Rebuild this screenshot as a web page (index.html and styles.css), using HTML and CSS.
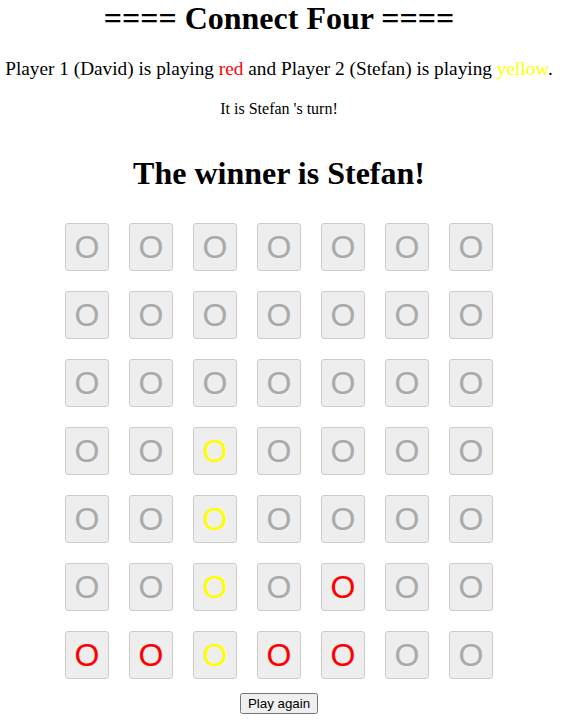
FILE: index.html
```html
<!DOCTYPE html>
<html>
<head>
<meta charset="utf-8">
<link rel="stylesheet" href="styles.css">
</head>
<body>
<main class="page">
  <h1 class="title">==== Connect Four ====</h1>
  <p class="players">Player 1 (David) is playing <span class="red">red</span> and Player 2 (Stefan) is playing <span class="yellow">yellow</span>.</p>
  <p class="turn">It is Stefan 's turn!</p>
  <h2 class="winner">The winner is Stefan!</h2>
  <div class="board">
    <button class="cell">O</button><button class="cell">O</button><button class="cell">O</button><button class="cell">O</button><button class="cell">O</button><button class="cell">O</button><button class="cell">O</button>
    <button class="cell">O</button><button class="cell">O</button><button class="cell">O</button><button class="cell">O</button><button class="cell">O</button><button class="cell">O</button><button class="cell">O</button>
    <button class="cell">O</button><button class="cell">O</button><button class="cell">O</button><button class="cell">O</button><button class="cell">O</button><button class="cell">O</button><button class="cell">O</button>
    <button class="cell">O</button><button class="cell">O</button><button class="cell y">O</button><button class="cell">O</button><button class="cell">O</button><button class="cell">O</button><button class="cell">O</button>
    <button class="cell">O</button><button class="cell">O</button><button class="cell y">O</button><button class="cell">O</button><button class="cell">O</button><button class="cell">O</button><button class="cell">O</button>
    <button class="cell">O</button><button class="cell">O</button><button class="cell y">O</button><button class="cell">O</button><button class="cell r">O</button><button class="cell">O</button><button class="cell">O</button>
    <button class="cell r">O</button><button class="cell r">O</button><button class="cell y">O</button><button class="cell r">O</button><button class="cell r">O</button><button class="cell">O</button><button class="cell">O</button>
  </div>
  <div class="actions"><button class="again">Play again</button></div>
</main>
</body>
</html>
```
FILE: styles.css
```css
html, body {
  margin: 0;
  padding: 0;
  background: #fff;
}
.page {
  width: 558px;
  font-family: "Liberation Serif", "Times New Roman", serif;
  color: #000;
  text-align: center;
}
.title {
  font-size: 32px;
  font-weight: bold;
  margin: 0;
  line-height: 37px;
}
.players {
  font-size: 19.3px;
  margin: 21px 0 0;
  line-height: 21px;
  white-space: nowrap;
}
.red { color: #ff0000; }
.yellow { color: #ffff00; }
.turn {
  font-size: 16px;
  margin: 21px 0 0;
  line-height: 18px;
}
.winner {
  font-size: 32px;
  font-weight: bold;
  margin: 37px 0 0;
  line-height: 37px;
}
.board {
  display: grid;
  grid-template-columns: repeat(7, 44px);
  grid-auto-rows: 48px;
  column-gap: 20px;
  row-gap: 20px;
  justify-content: center;
  margin-top: 31px;
}
.cell {
  width: 44px;
  height: 48px;
  padding: 0;
  margin: 0;
  background: #eeeeee;
  border: 1px solid #cccccc;
  border-radius: 3px;
  font-family: "Liberation Sans", Arial, sans-serif;
  font-size: 32px;
  color: #aaaaaa;
  line-height: 46px;
}
.cell.r { color: #ff0000; }
.cell.y { color: #ffff00; }
.actions {
  margin-top: 14px;
}
.again {
  font-family: "Liberation Sans", Arial, sans-serif;
  font-size: 13.33px;
}
```
